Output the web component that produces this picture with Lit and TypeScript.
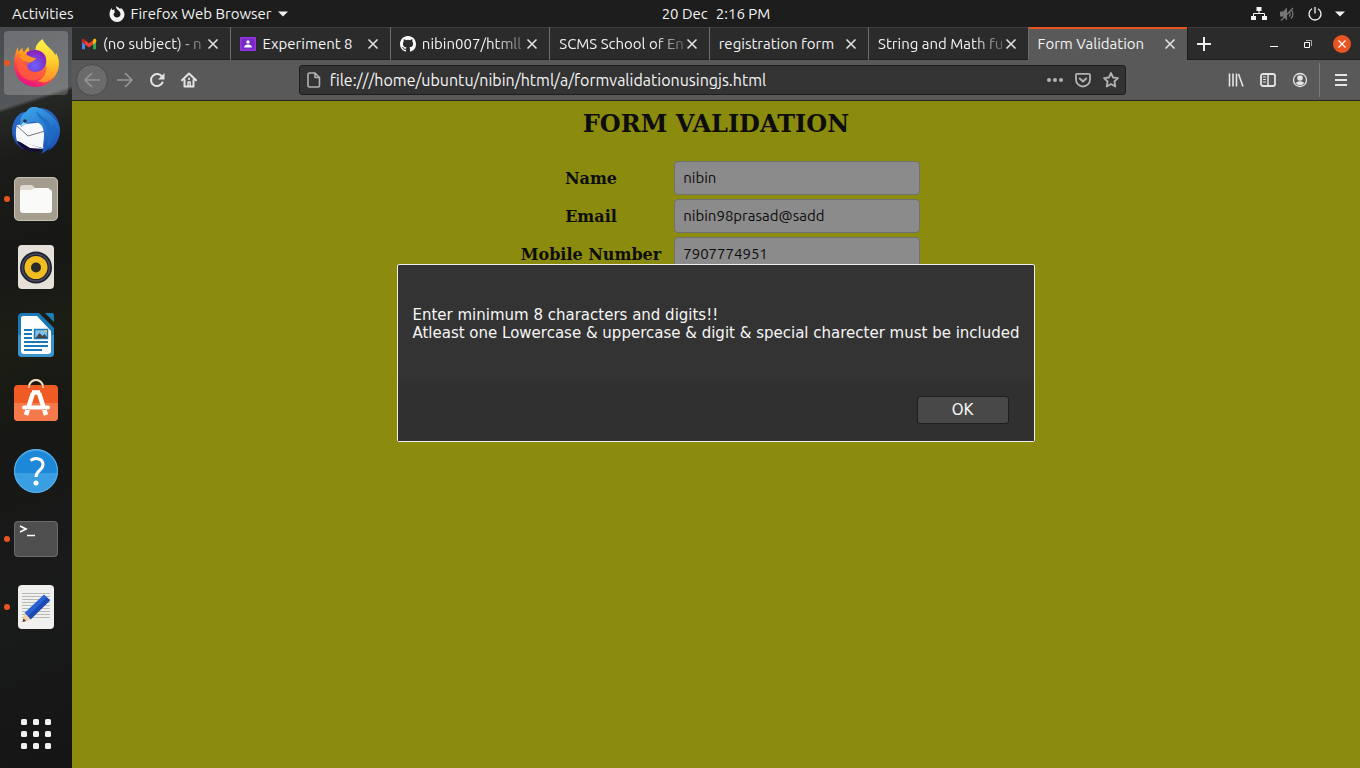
import { LitElement, html, css, svg, nothing, TemplateResult } from "lit";
import { customElement, property } from "lit/decorators.js";
import { classMap } from "lit/directives/class-map.js";

const closeGlyph = html`<svg viewBox="0 0 12 12" width="12" height="12" aria-hidden="true">
  <path d="M1.5 1.5l9 9M10.5 1.5l-9 9" stroke="currentColor" stroke-width="1.6" fill="none" /></svg>`;

const gmail = html`<svg viewBox="0 0 16 16" width="16" height="16" aria-hidden="true">
  <path d="M1 4v9.200h3V7.500z" fill="#4285f4" /><path d="M15 4v9.200h-3V7.500z" fill="#34a853" />
  <path d="M12 4.200v4.200l3.200-2.500V4.300c0-1.500-1.600-2-2.500-1.200z" fill="#fbbc04" />
  <path d="M4 8.400V4.200L8 7.200l4-3v4.200l-4 3z" fill="#ea4335" />
  <path d="M.8 4.300v1.600L4 8.400V4.200L3.200 3.100C2.200 2.300.8 2.900.8 4.300z" fill="#c5221f" /></svg>`;

const classroom = html`<svg viewBox="0 0 16 16" width="16" height="16" aria-hidden="true">
  <rect x="0" y="1" width="16" height="14" rx="1" fill="#9334e6" /><rect x="1.500" y="2.500" width="13" height="11" fill="#7a28c0" />
  <circle cx="8" cy="6" r="1.700" fill="#fff" /><path d="M4 11.500c0-4 8-4 8 0z" fill="#fff" /></svg>`;

const github = html`<svg viewBox="0 0 16 16" width="16" height="16" aria-hidden="true">
  <path fill="#fff" d="M8 0C3.580 0 0 3.580 0 8c0 3.540 2.290 6.530 5.470 7.590.4.070.55-.17.55-.38 0-.19-.01-.82-.01-1.490-2.010.37-2.530-.49-2.690-.94-.09-.23-.48-.94-.82-1.130-.28-.15-.68-.52-.01-.53.63-.01 1.080.58 1.230.82.72 1.210 1.870.87 2.330.66.070-.52.28-.87.51-1.070-1.780-.2-3.640-.89-3.640-3.950 0-.87.31-1.590.82-2.150-.08-.2-.36-1.020.08-2.120 0 0 .67-.21 2.200.82a7.600 7.600 0 0 1 4 0c1.530-1.040 2.200-.82 2.200-.82.44 1.100.16 1.920.08 2.120.51.56.82 1.270.82 2.150 0 3.070-1.870 3.750-3.650 3.950.29.25.54.73.54 1.480 0 1.070-.01 1.930-.01 2.200 0 .21.15.46.55.38A8.010 8.010 0 0 0 16 8c0-4.420-3.580-8-8-8z" /></svg>`;

interface TabInfo { title: string; icon?: TemplateResult; active?: boolean; faded?: boolean; }
const tabs: TabInfo[] = [
  { title: "(no subject) - n", icon: gmail, faded: true },
  { title: "Experiment 8", icon: classroom },
  { title: "nibin007/htmll", icon: github, faded: true },
  { title: "SCMS School of En", faded: true },
  { title: "registration form" },
  { title: "String and Math fu", faded: true },
  { title: "Form Validation", active: true },
];

const line = (body: unknown) => html`<svg viewBox="0 0 16 16" width="16" height="16" fill="none"
  stroke="currentColor" stroke-width="2" stroke-linecap="round" stroke-linejoin="round" aria-hidden="true">${body}</svg>`;

const glyphs = {
  back: line(svg`<path d="M15.500 8H1M7.500 1.500L1 8l6.500 6.500" stroke-width="1.600" />`),
  forward: line(svg`<path d="M.5 8H15M8.500 1.500L15 8l-6.500 6.500" stroke-width="1.600" />`),
  reload: line(svg`<path d="M13.500 10.500a6 6 0 1 1-.6-6" /><path d="M15.500 1v6.500H9z" fill="currentColor" stroke="none" />`),
  home: line(svg`<path d="M1 8.300L8 1.500l7 6.800" /><path d="M3.500 8v6.500h9V8" /><path d="M7 14v-4h2.200v4" stroke-width="1.500" /><path d="M8 6.500v.4" />`),
  page: line(svg`<path d="M3.500 1h5.500l4.500 4.500v8a1.500 1.500 0 0 1-1.500 1.500H3.500A1.500 1.500 0 0 1 2 13.500v-11A1.500 1.500 0 0 1 3.500 1zM9 1.500v4h4" stroke-width="1.600" />`),
  dots: line(svg`<path d="M2 8h.01M8 8h.01M14 8h.01" stroke-width="4" />`),
  pocket: line(svg`<path d="M2 1.800h12a1 1 0 0 1 1 1V7.500a7 7 0 0 1-14 0V2.800a1 1 0 0 1 1-1z" stroke-width="1.800" /><path d="M4.800 6.500L8 9.500l3.200-3" />`),
  star: line(svg`<path d="M8 1l2.100 4.500 4.900.6-3.600 3.400.9 5L8 12l-4.300 2.500.9-5L1 6.100l4.900-.6z" stroke-width="1.800" />`),
  library: line(svg`<path d="M1.500 1.500v13M5 1.500v13M8.500 1.500v13M10.500 2l4.500 12.500" stroke-width="1.600" stroke-linecap="butt" />`),
  sidebar: line(svg`<rect x="1" y="2" width="14" height="12" rx="2" stroke-width="1.800" /><path d="M8 2v12" stroke-width="1.500" /><path d="M3.500 5h2M3.500 7.500h2M3.500 10h2" stroke-width="1" />`),
  account: line(svg`<circle cx="8" cy="8" r="6.500" stroke-width="1.300" /><circle cx="8" cy="6" r="2.800" fill="currentColor" stroke="none" /><path d="M3.800 11c2-2.500 6.400-2.500 8.400 0a5 5 0 0 1-8.400 0z" fill="currentColor" stroke="none" />`),
  menu: line(svg`<path d="M2 3h12M2 8h12M2 13h12" stroke-linecap="butt" />`),
};

const art = (body: unknown) => html`<svg viewBox="0 0 48 48" width="48" height="48" aria-hidden="true">${body}</svg>`;

interface DockItem { name: string; running?: boolean; active?: boolean; picture: TemplateResult; }
const dock: DockItem[] = [
  { name: "Firefox Web Browser", running: true, active: true, picture: art(svg`
    <defs>
      <linearGradient id="fx-body" x1=".85" y1=".1" x2=".35" y2="1"><stop offset="0" stop-color="#ffe226" /><stop offset=".35" stop-color="#ff9a1f" /><stop offset=".7" stop-color="#ff3d4c" /><stop offset="1" stop-color="#e3108c" /></linearGradient>
      <radialGradient id="fx-globe" cx=".45" cy=".7" r=".65"><stop offset="0" stop-color="#6a63ff" /><stop offset="1" stop-color="#8a22b8" /></radialGradient>
      <linearGradient id="fx-flame" x1=".5" y1="0" x2=".5" y2="1"><stop offset="0" stop-color="#fff44f" /><stop offset=".5" stop-color="#ffd02b" /><stop offset="1" stop-color="#ff8a2a" /></linearGradient>
    </defs>
    <path d="M6 8c0 2 0 3 .5 5 1-1.500 2.500-3 4-4 0 2 .5 3 1.500 4.500 1.500-3 3-4.500 5-5.500-.4 2 0 3.500 1 4.500l16-4c7 3 12 9 12 17a22 22 0 0 1-44 1C2 19 3.500 12 6 8z" fill="url(#fx-body)" />
    <path d="M30.500 0c1 3 4 6 7 9 3 2.500 5 5 5.500 8l1-3c2 3 3 7 3 11 0 9-6 16-13 18-4 1-8-1-8-1 6-3 9-8 8-14-1-6-5-9-8-12-3-3-5-9 4.500-16z" fill="url(#fx-flame)" />
    <path d="M15 13c6-3 13-3 17 2 3 4 3 10 0 14-4 5-12 5-16 1-3-3-4-6-3-9z" fill="url(#fx-globe)" />
    <path d="M5 18c5-3 9-2 13 0 2 1 4 1 6 1-1 2.500-4 3.500-6 4.500-2 1.500-3 3-2 6 2.500 5 10 5 14 2l5-4c-1 8-6 13-13 14C11 42 3 33 5 18z" fill="#ff603a" opacity=".75" />
    <path d="M7 17c4-2 8-1.500 11 .5 2 1 4 1.500 6 1.500-1 2.500-3.500 3.500-6 4.500-4-.5-9-2.500-11-6.500z" fill="#ff9420" />`) },
  { name: "Thunderbird Mail", picture: art(svg`
    <defs><linearGradient id="tb-ring" x1=".2" y1="0" x2=".6" y2="1"><stop offset="0" stop-color="#2a78d4" /><stop offset="1" stop-color="#1b3590" /></linearGradient>
      <linearGradient id="tb-wing" x1=".2" y1="0" x2=".7" y2="1"><stop offset="0" stop-color="#3ba5ea" /><stop offset="1" stop-color="#1850b0" /></linearGradient></defs>
    <path d="M27 1c12 0 21 10 21 22 0 9-5 17-12 21l1-3c-2 3-5 5-8 6l2-4-20-1C4 38 0 31 0 24c0-7 3-14 9-18z" fill="url(#tb-ring)" />
    <path d="M5 18l27-3 2 27L5 34C3 28 4 22 5 18z" fill="#f7f8fa" />
    <path d="M5 19l11 10 17-5" fill="none" stroke="#73777e" stroke-width="1" />
    <path d="M5 34l26 8c-6 3-13 3-19 0-3-2-6-5-7-8z" fill="#120b38" /><path d="M5 33l27 9-14-1z" fill="#f7f8fa" />
    <path d="M9 20c-2-7 0-12 5-15 2-2 2-4 6-5 5-1 9 2 13 4 7 4 14 11 15 18 0 9-4 17-11 21l1-3c-3 3-5 5-8 6 1-3 2-4 1-7 1-8 2-14-1-20-4-5-9-5-13-3-3 1-6 2-8 4z" fill="url(#tb-wing)" />
    <path d="M24 4c4 3 6 6 10 8 3 2 4 5 5 8l4-3c1 8-1 15-8 23 3-9 2-18-3-24-3-4-7-7-8-12z" fill="#1d6cc6" opacity=".8" />
    <path d="M9 20c0-2 1-4 3-5l3 2z" fill="#a5d6f6" /><circle cx="13" cy="14" r="1.800" fill="#27343f" />`) },
  { name: "Files", running: true, picture: art(svg`
    <rect x="2" y="2" width="44" height="44" rx="5" fill="#a49d8d" /><rect x="2.500" y="2.500" width="43" height="43" rx="5" fill="none" stroke="#c7c1b3" />
    <path d="M8 13a3 3 0 0 1 3-3h9l4 4h13a3 3 0 0 1 3 3v6H8z" fill="#dedad2" />
    <rect x="8" y="15" width="32" height="23" rx="3" fill="#fafaf9" /><path d="M8 17c0-2 1-2 3-2h8l4-2h14v6H8z" fill="#fafaf9" />`) },
  { name: "Rhythmbox", picture: art(svg`
    <rect x="6" y="2" width="36" height="44" rx="4" fill="#e5e1d8" />
    <circle cx="24" cy="24.500" r="16" fill="#1f2230" /><circle cx="24" cy="24.500" r="13.500" fill="none" stroke="#4b4d5c" stroke-width="1.500" /><circle cx="24" cy="24.500" r="11.500" fill="#f2bd20" /><circle cx="24" cy="24.500" r="5" fill="#2a2a2a" />`) },
  { name: "LibreOffice Writer", picture: art(svg`
    <path d="M10 2h17l15 15v25a4 4 0 0 1-4 4H10a4 4 0 0 1-4-4V6a4 4 0 0 1 4-4z" fill="#1a78b4" /><path d="M6 24h36v18a4 4 0 0 1-4 4H10a4 4 0 0 1-4-4z" fill="#3a94cb" />
    <path d="M11 5h14l14 15v20a3 3 0 0 1-3 3H12a3 3 0 0 1-3-3V7c0-1 1-2 2-2z" fill="#fff" /><path d="M33 2h7a2 2 0 0 1 2 2v7z" fill="#1f7fb9" />
    <path d="M12 19h8M12 23h8M12 27h8M12 31h24M12 35h24M12 39h18" stroke="#1a78b4" stroke-width="2" />
    <rect x="22.500" y="18.500" width="13" height="9" fill="#7fc0ea" stroke="#1a78b4" stroke-width="1.500" /><path d="M23.500 27l4-5 3 3 2-2 3 4z" fill="#444" /><path d="M32 19h3v3z" fill="#f6c32c" />`) },
  { name: "Ubuntu Software", picture: art(svg`
    <path d="M17 11V8a7 7 0 0 1 14 0v3" fill="none" stroke="#efe0bf" stroke-width="2" />
    <rect x="2" y="6" width="44" height="36" rx="4" fill="#f05a24" /><path d="M2 24h44v14a4 4 0 0 1-4 4H6a4 4 0 0 1-4-4z" fill="#f47a4b" />
    <path d="M17 9V8a7 7 0 0 1 14 0v1" fill="none" stroke="#efe0bf" stroke-width="1.500" />
    <path d="M14 36l7-22M34 36l-7-22M20 13.500h8" stroke="#fff" stroke-width="4.500" fill="none" /><path d="M12 28.500h24" stroke="#fff" stroke-width="4" stroke-linecap="round" /><path d="M12 30.500h24" stroke="#f6b79c" stroke-width="1" />`) },
  { name: "Help", picture: art(svg`
    <circle cx="24" cy="24" r="22" fill="#3a9ee2" /><path d="M2 26a22 22 0 0 1 44 0z" fill="#1e88d8" /><circle cx="24" cy="24" r="21.500" fill="none" stroke="#5cb3ec" />
    <path d="M18.500 13.500c5-3.500 12.500-2 12.500 4 0 6-7 6-7 12.500" fill="none" stroke="#fff" stroke-width="3" /><circle cx="24" cy="36" r="2.500" fill="#fff" />`) },
  { name: "Terminal", running: true, picture: art(svg`
    <rect x="2" y="6" width="44" height="36" rx="4" fill="#4e4e4e" /><rect x="2.500" y="6.500" width="43" height="35" rx="4" fill="none" stroke="#6c6c6c" />
    <path d="M8 11l6 3-6 3M15 20.500h8" stroke="#fff" stroke-width="1.700" fill="none" />`) },
  { name: "Text Editor", running: true, picture: art(svg`
    <rect x="6" y="2" width="36" height="44" rx="4" fill="#f0f0ef" /><path d="M10 10.500h28M10 13.500h28M10 16.500h28M10 19.500h28M10 22.500h28M10 25.500h28M10 28.500h28M10 31.500h28M10 34.500h28" stroke="#b9b9b9" />
    <path d="M12.500 30L32 11.500l6 5.500-19.500 19.500z" fill="#2a62d6" /><path d="M15.500 33.500l19-19 3.500 3-19.500 19z" fill="#1d49b4" /><path d="M12.500 30l6.500 6.500L10.500 39z" fill="#f3d0a4" /><path d="M10.500 39l1-3.500 2.500 2.500z" fill="#333" />`) },
];

/** One browser tab: favicon, fading title and close button. */
@customElement("browser-tab")
class BrowserTab extends LitElement {
  @property({ attribute: false }) info!: TabInfo;

  static styles = css`
    :host { flex: 1; min-width: 0; display: flex; }
    .tab { flex: 1; min-width: 0; display: flex; align-items: center; padding: 1px 11px 0 9px; border-right: 1px solid #6c6c6c; box-sizing: border-box;
      box-shadow: inset 0 1px #3d3d3d, inset 0 -1px #1c1c1c; color: #f3f3f3; }
    .tab.active { background: #595959; border-right-color: #1c1c1c; box-shadow: inset 0 2px #e95420; }
    .title { flex: 1; min-width: 0; overflow: hidden; white-space: nowrap; line-height: 20px; }
    .faded { mask-image: linear-gradient(to left, #0003, #000 32px); }
    .icon { display: flex; margin-right: 6px; }
    button { display: flex; padding: 0; border: 0; background: none; color: #e2e2e2; }
  `;

  render() {
    const { title, icon, active, faded } = this.info;
    return html`<div class=${classMap({ tab: true, active: !!active })} role="tab" aria-selected=${active ? "true" : "false"}>
      ${icon ? html`<span class="icon">${icon}</span>` : nothing}
      <span class=${classMap({ title: true, faded: !!faded })}>${title}</span>
      <button aria-label="Close tab">${closeGlyph}</button>
    </div>`;
  }
}

@customElement("app-root")
class AppRoot extends LitElement {
  static styles = css`
    :host { display: flex; flex-direction: column; height: 100vh; overflow: hidden; background: #1a1a1a; color: #f3f3f3;
      font: 15px/20px Ubuntu, "Noto Sans", sans-serif; }
    button { font: inherit; color: inherit; padding: 0; border: 0; background: none; }
    svg { display: block; }
    .bar { height: 27px; flex: none; display: flex; align-items: center; background: #1d1d1d; }
    .bar-left { flex: 1 0 87px; display: flex; align-items: center; gap: 35px; padding-left: 12px; box-sizing: border-box; white-space: nowrap; }
    .bar-right { flex: 1 0 15px; display: flex; align-items: center; justify-content: flex-end; gap: 12px; padding-right: 15px; box-sizing: border-box; }
    .app-menu { display: flex; align-items: center; gap: 6px; }
    .clock { display: flex; gap: 8px; }
    .main { flex: 1; min-height: 0; display: flex; }
    .dock { width: 72px; flex: none; display: flex; flex-direction: column; gap: 4px; padding: 4px; box-sizing: border-box;
      background: linear-gradient(162deg, #47494d 0, #55585a 78px, #262825 82px, #1b1c1a 130px, #171816 230px, #1c1d14 300px, #171715 400px, #191a1a 560px, #151515 100%); }
    .launcher { height: 64px; display: flex; align-items: center; justify-content: center; border-radius: 4px; position: relative; }
    .launcher.active { background: #ffffff33; }
    .launcher.running::before { content: ""; position: absolute; left: 0; top: 29px; width: 6px; height: 6px; border-radius: 50%; background: #e95420; }
    .apps { margin-top: auto; height: 60px; display: flex; align-items: center; justify-content: center; }
    .window { flex: 1; min-width: 0; display: flex; flex-direction: column; }
    .strip { height: 33px; flex: none; display: flex; background: #2b2b2b; }
    .tabs { flex: 1; min-width: 0; display: flex; }
    .strip-end { width: 172px; flex: none; display: flex; align-items: center; justify-content: space-between; padding: 0 9px; box-sizing: border-box; box-shadow: inset 0 1px #3d3d3d, inset 0 -1px #1c1c1c; }
    .window-buttons { display: flex; align-items: center; gap: 16px; }
    .window-buttons button { width: 18px; height: 18px; border-radius: 50%; display: flex; align-items: center; justify-content: center; }
    .window-buttons .close-window { background: #e95420; }
    .toolbar { height: 41px; flex: none; display: flex; align-items: center; background: #595959; border-bottom: 1px solid #242424; box-sizing: border-box; padding: 0 3px 0 4px; }
    .tool { width: 32px; height: 32px; flex: none; display: flex; align-items: center; justify-content: center; color: #e4e4e4; }
    .tool.off { color: #969696; }
    .tool.round { border-radius: 50%; background: #6b6b6b; border: 1px solid #4a4a4a; box-sizing: border-box; margin-right: 1px; }
    .gap { flex: 95; }
    .url { flex: 825; min-width: 0; height: 30px; display: flex; align-items: center; gap: 12px; padding: 0 6px; box-sizing: border-box; background: #333; border: 1px solid #1e1e1e; border-radius: 3px; color: #b2b2b2; }
    .url input { flex: 1; min-width: 0; margin-left: -4px; padding: 0; border: 0; outline: 0; background: none; color: #f5f5f5; font: inherit; font-size: 16px; height: 24px; }
    .rule { width: 1px; height: 34px; margin: 0 5px 0 3px; background: #7a7a7a; }
    .page { flex: 1; min-height: 0; position: relative; background: #8b8b0d; color: #0d0d0d; font-family: "DejaVu Serif", serif; }
    h1 { margin: 0; padding-top: 9px; text-align: center; font-size: 24px; line-height: 28px; }
    form { display: grid; grid-template-columns: auto 246px; justify-content: center; align-items: center; gap: 4px; padding-top: 23px; }
    form label { padding: 2px 9px 0; text-align: center; font-size: 16px; font-weight: bold; }
    form input { height: 34px; box-sizing: border-box; padding: 0 8px 2px; border: 1px solid #707070; border-radius: 4px; background: #8b8b8b; color: #0d0d0d; font: 15px/20px Ubuntu, "Noto Sans", sans-serif; }
    .overlay { position: absolute; inset: 0; display: flex; justify-content: center; align-items: flex-start; padding-top: 163px; }
    .alert { border: 1px solid #f0f0f0; border-radius: 2px; background: #333; color: #f6f6f6; font: 15px/18px "DejaVu Sans", sans-serif; }
    .alert p { margin: 0; padding: 41px 14px 39px; }
    .alert footer { display: flex; justify-content: flex-end; padding: 15px 25px 17px; background: #303030; }
    .alert button { width: 92px; height: 28px; border: 1px solid #1e1e1e; border-radius: 3px; background: #484848; }
  `;

  render() {
    return html`
      <header class="bar">
        <div class="bar-left">
          <button>Activities</button>
          <button class="app-menu">
            <svg viewBox="0 0 16 16" width="16" height="16" aria-hidden="true"><path fill="#f3f3f3" d="M7 0c1 1 3 1.500 4 3l1-1c2 1.500 3.500 4 3.500 6.500a7.500 7.500 0 0 1-15 0C.5 6 1 4 3 2v2l3-.5c-1 1-1 2 0 2.500L4.500 8c0 2 1.500 3.500 3.500 3.500S11.500 10 11.500 8 10 5 9 4C7.500 3 7 1.500 7 0z" /></svg>
            Firefox Web Browser
            <svg viewBox="0 0 10 6" width="10" height="6" aria-hidden="true"><path d="M0 .5h10L5 5.500z" fill="#f3f3f3" /></svg>
          </button>
        </div>
        <div class="clock"><span>20 Dec</span><span>2:16 PM</span></div>
        <div class="bar-right">
          <svg viewBox="0 0 16 16" width="16" height="16" aria-hidden="true"><path d="M5.500 1h5v4h-5zM0 10h5v4H0zM11 10h5v4h-5z" fill="#f3f3f3" /><path d="M8 5v3M2.500 10V7.500h11V10" stroke="#f3f3f3" fill="none" /></svg>
          <svg viewBox="0 0 16 16" width="16" height="16" aria-hidden="true"><path d="M1 5.500h3l4-4v13l-4-4H1z" fill="#777" /><path d="M10 5.500c1.500 1 1.500 4 0 5M12 3.500c2.500 2 2.500 7 0 9M2 14.500L14 2" stroke="#777" stroke-width="1.200" fill="none" /></svg>
          <svg viewBox="0 0 16 16" width="16" height="16" aria-hidden="true"><path d="M5 2.800a6 6 0 1 0 6 0M8 1v6.500" stroke="#f3f3f3" stroke-width="1.300" fill="none" /></svg>
          <svg viewBox="0 0 10 6" width="10" height="6" aria-hidden="true"><path d="M0 .5h10L5 5.500z" fill="#f3f3f3" /></svg>
        </div>
      </header>
      <div class="main">
        <nav class="dock" aria-label="Dock">
          ${dock.map((item) => html`<button class=${classMap({ launcher: true, active: !!item.active, running: !!item.running })} aria-label=${item.name}>${item.picture}</button>`)}
          <button class="apps" aria-label="Show applications">
            <svg viewBox="0 0 30 30" width="30" height="30">${[0, 12, 24].map((y) => [0, 12, 24].map((x) => svg`<rect x=${x} y=${y} width="6" height="6" rx="1.500" fill="#f2f2f2" />`))}</svg>
          </button>
        </nav>
        <section class="window">
          <div class="strip">
            <div class="tabs" role="tablist">${tabs.map((t) => html`<browser-tab .info=${t}></browser-tab>`)}</div>
            <div class="strip-end">
              <button aria-label="New tab"><svg viewBox="0 0 14 14" width="14" height="14"><path d="M7 0v14M0 7h14" stroke="#eee" stroke-width="2" /></svg></button>
              <div class="window-buttons">
                <button aria-label="Minimize"><svg viewBox="0 0 8 8" width="8" height="8"><path d="M0 6.500h8" stroke="#fff" /></svg></button>
                <button aria-label="Restore"><svg viewBox="0 0 8 8" width="8" height="8"><path d="M.5 2.500h5v5h-5z" stroke="#fff" fill="none" /><path d="M2 .5h5.500V6" stroke="#aaa" fill="none" /></svg></button>
                <button class="close-window" aria-label="Close window"><svg viewBox="0 0 8 8" width="8" height="8"><path d="M.5.5l7 7M7.500.5l-7 7" stroke="#fff" stroke-width="1.300" /></svg></button>
              </div>
            </div>
          </div>
          <div class="toolbar">
            <button class="tool round off" aria-label="Back">${glyphs.back}</button>
            <button class="tool off" aria-label="Forward">${glyphs.forward}</button>
            <button class="tool" aria-label="Reload">${glyphs.reload}</button>
            <button class="tool" aria-label="Home">${glyphs.home}</button>
            <div class="gap"></div>
            <div class="url">
              ${glyphs.page}
              <input aria-label="Address" value="file:///home/ubuntu/nibin/html/a/formvalidationusingjs.html" />
              <button aria-label="Page actions">${glyphs.dots}</button>
              <button aria-label="Save to Pocket">${glyphs.pocket}</button>
              <button aria-label="Bookmark">${glyphs.star}</button>
            </div>
            <div class="gap"></div>
            <button class="tool" aria-label="Library">${glyphs.library}</button>
            <button class="tool" aria-label="Sidebars">${glyphs.sidebar}</button>
            <button class="tool" aria-label="Account">${glyphs.account}</button>
            <div class="rule"></div>
            <button class="tool" aria-label="Menu">${glyphs.menu}</button>
          </div>
          <main class="page">
            <h1>FORM VALIDATION</h1>
            <form>
              <label for="name">Name</label><input id="name" value="nibin" />
              <label for="email">Email</label><input id="email" value="nibin98prasad@sadd" />
              <label for="mobile">Mobile Number</label><input id="mobile" value="7907774951" />
            </form>
            <div class="overlay">
              <div class="alert" role="alertdialog" aria-modal="true" aria-describedby="message">
                <p id="message">Enter minimum 8 characters and digits!!<br />Atleast one Lowercase &amp; uppercase &amp; digit &amp; special charecter must be included</p>
                <footer><button>OK</button></footer>
              </div>
            </div>
          </main>
        </section>
      </div>
    `;
  }
}
